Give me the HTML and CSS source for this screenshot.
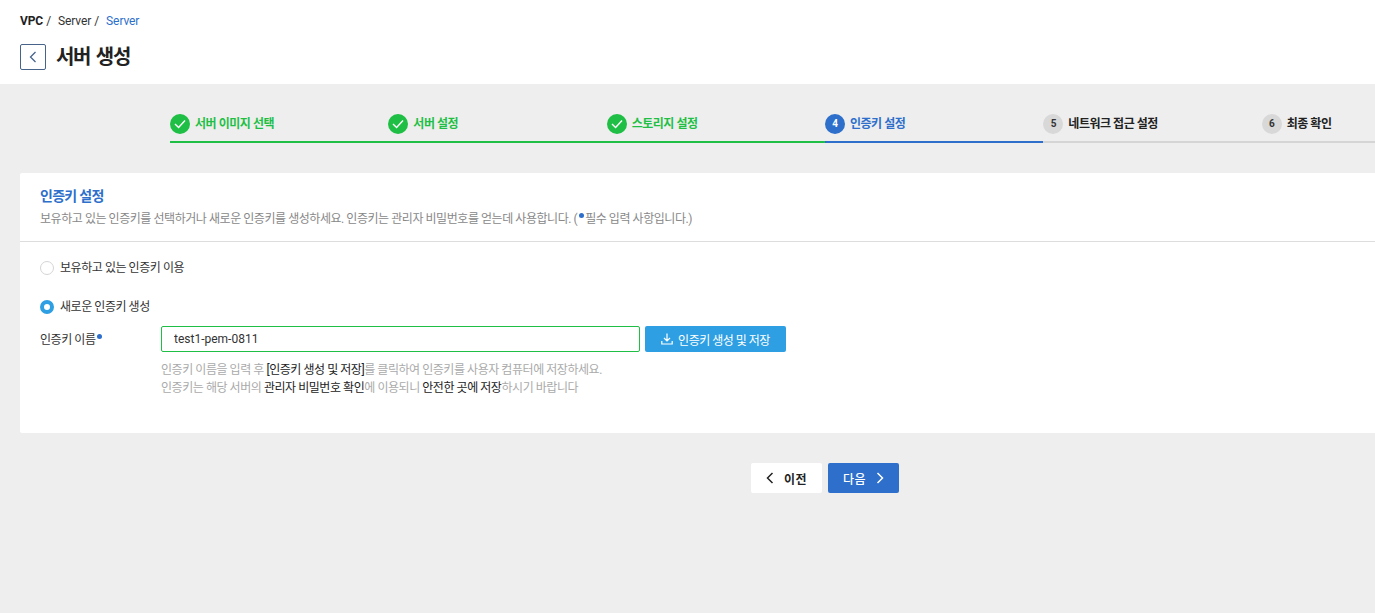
FILE: index.html
```html
<!DOCTYPE html>
<html lang="ko">
<head>
<meta charset="utf-8">
<title>서버 생성</title>
<link rel="stylesheet" href="styles.css">
</head>
<body>
<header class="top">
  <nav class="crumbs">
    <b>VPC</b><span class="sep">/</span><span>Server</span><span class="sep">/</span><span class="cur">Server</span>
  </nav>
  <div class="title-row">
    <button class="back" aria-label="뒤로"><svg width="8" height="12" viewBox="0 0 8 12"><path d="M6.5 1 1.5 6l5 5" fill="none" stroke="#47638a" stroke-width="1.3"/></svg></button>
    <h1>서버 생성</h1>
  </div>
</header>
<main class="main">
  <div class="wide">
    <ol class="steps">
      <li class="step done"><span class="dot"><svg width="12" height="10" viewBox="0 0 12 10"><path d="M1 5l3.6 3.5L11 1.5" fill="none" stroke="#fff" stroke-width="1.4"/></svg></span>서버 이미지 선택</li>
      <li class="step done"><span class="dot"><svg width="12" height="10" viewBox="0 0 12 10"><path d="M1 5l3.6 3.5L11 1.5" fill="none" stroke="#fff" stroke-width="1.4"/></svg></span>서버 설정</li>
      <li class="step done"><span class="dot"><svg width="12" height="10" viewBox="0 0 12 10"><path d="M1 5l3.6 3.5L11 1.5" fill="none" stroke="#fff" stroke-width="1.4"/></svg></span>스토리지 설정</li>
      <li class="step active"><span class="dot">4</span>인증키 설정</li>
      <li class="step"><span class="dot">5</span>네트워크 접근 설정</li>
      <li class="step"><span class="dot">6</span>최종 확인</li>
    </ol>
    <section class="card">
      <div class="card-head">
        <h2>인증키 설정</h2>
        <p>보유하고 있는 인증키를 선택하거나 새로운 인증키를 생성하세요. 인증키는 관리자 비밀번호를 얻는데 사용합니다. (<i class="req up"></i>필수 입력 사항입니다.)</p>
      </div>
      <div class="card-body">
        <div class="radio-row"><span class="radio"></span>보유하고 있는 인증키 이용</div>
        <div class="radio-row second"><span class="radio on"></span>새로운 인증키 생성</div>
        <div class="field">
          <label class="field-label">인증키 이름<i class="req"></i></label>
          <div class="field-main">
            <div class="input-row">
              <input class="input" type="text" value="test1-pem-0811">
              <button class="gen"><svg width="12" height="12" viewBox="0 0 12 12"><path d="M6 .5v7.2M3 5l3 3 3-3M.8 8v3h10.4V8" fill="none" stroke="#fff" stroke-width="1.2"/></svg>인증키 생성 및 저장</button>
            </div>
            <p class="help">인증키 이름을 입력 후 <em>[인증키 생성 및 저장]</em>를 클릭하여 인증키를 사용자 컴퓨터에 저장하세요.<br>인증키는 해당 서버의 <em>관리자 비밀번호 확인</em>에 이용되니 <em>안전한 곳에 저장</em>하시기 바랍니다</p>
          </div>
        </div>
      </div>
    </section>
    <div class="actions">
      <button class="btn prev"><svg width="8" height="12" viewBox="0 0 8 12"><path d="M6.5 1 1.5 6l5 5" fill="none" stroke="#222" stroke-width="1.5"/></svg>이전</button>
      <button class="btn next">다음<svg width="8" height="12" viewBox="0 0 8 12"><path d="M1.5 1l5 5-5 5" fill="none" stroke="#fff" stroke-width="1.5"/></svg></button>
    </div>
  </div>
</main>
</body>
</html>
```
FILE: styles.css
```css
* { box-sizing: border-box; }
html, body { margin: 0; height: 100%; }
body {
  font-family: Roboto, "Noto Sans CJK KR", sans-serif;
  letter-spacing: -0.45px;
  color: #222;
  background: #eee;
  overflow: hidden;
  display: flex;
  flex-direction: column;
}
.top { background: #fff; height: 84px; padding: 14px 20px 0; flex: none; }
.crumbs { display: flex; align-items: center; height: 14px; font-size: 12px; line-height: 14px; letter-spacing: -0.1px; color: #333; }
.crumbs b { font-weight: 700; color: #222; }
.sep { margin: 0 7px 0 3px; }
.crumbs .cur { color: #2d6fcb; }
.title-row { display: flex; align-items: center; margin-top: 16px; }
.back {
  width: 26px; height: 26px; padding: 0; background: #fff;
  border: 1px solid #47638a; border-radius: 2px;
  display: flex; align-items: center; justify-content: center;
}
h1 { margin: 0 0 0 10px; font-size: 20px; line-height: 26px; font-weight: 700; letter-spacing: -1.3px; word-spacing: 2px; color: #222; }
.main { flex: 1; overflow: hidden; }
.wide { width: 1650px; }
.steps {
  list-style: none; margin: 0 auto; padding: 30px 0 0; width: 1310px;
  display: grid; grid-template-columns: repeat(6, 1fr);
}
.step {
  display: flex; align-items: center; gap: 5px; height: 29px; padding-bottom: 7px;
  font-size: 12px; line-height: 20px; font-weight: 700; letter-spacing: -0.47px; color: #222;
  border-bottom: 2px solid #d5d5d5;
}
.dot {
  width: 20px; height: 20px; border-radius: 50%; background: #d8d8d8; color: #333;
  display: flex; align-items: center; justify-content: center;
  font-size: 10px; flex: none;
}
.step.done { color: #1fbf45; border-color: #1fbf45; }
.step.done .dot { background: #1fbf45; }
.step.active { color: #2d6fcb; border-color: #2d6fcb; }
.step.active .dot { background: #2d6fcb; color: #fff; }
.card {
  margin: 30px 20px 0; background: #fff; border-radius: 2px; height: 260px;
}
.card-head { height: 69px; padding: 14px 20px 0; border-bottom: 1px solid #ddd; }
h2 { margin: 0; font-size: 14px; line-height: 18px; font-weight: 700; letter-spacing: -0.7px; color: #2d6fcb; }
.card-head p { margin: 5px 0 0; font-size: 12px; line-height: 18px; color: #888; }
.req {
  display: inline-block; width: 5px; height: 5px; border-radius: 50%; background: #2d6fcb;
  margin-left: 2px; vertical-align: 5px;
}
.req.up { margin: 0 1px 0 2px; }
.card-body { padding: 17px 20px 0; font-size: 12px; }
.radio-row { display: flex; align-items: center; height: 18px; line-height: 18px; color: #333; }
.radio-row.second { margin-top: 21px; }
.radio {
  width: 14px; height: 14px; border-radius: 50%; border: 1px solid #d5d5d5; background: #fff;
  margin-right: 6px; flex: none;
}
.radio.on { border: 4px solid #2f9fe3; }
.field { display: flex; margin-top: 10px; }
.field-label { width: 121px; flex: none; height: 26px; line-height: 28px; color: #333; }
.field-main { flex: 1; }
.input-row { display: flex; gap: 5px; }
.input {
  width: 479px; height: 26px; padding: 0 12px; border: 1px solid #1fbf45; border-radius: 2px;
  font: 12px Roboto, sans-serif; letter-spacing: 0; color: #333; outline: none; background: #fff;
}
.gen {
  width: 141px; height: 26px; padding: 0; border: 0; border-radius: 2px; background: #2f9fe3; color: #fff;
  font: 12px Roboto, "Noto Sans CJK KR", sans-serif; letter-spacing: -0.5px;
  display: flex; align-items: center; justify-content: center; gap: 5px;
}
.help { margin: 9px 0 0; font-size: 12px; line-height: 18px; color: #aaa; }
.help em { font-style: normal; color: #222; }
.actions { display: flex; justify-content: center; gap: 6px; margin-top: 30px; }
.btn {
  width: 71px; height: 30px; border: 0; border-radius: 2px; padding: 0;
  font: 700 12px Roboto, "Noto Sans CJK KR", sans-serif; letter-spacing: 0.5px;
  display: flex; align-items: center; justify-content: center; gap: 10px;
}
.prev { background: #fff; color: #222; }
.next { background: #2d6fcb; color: #fff; font-weight: 500; }
```
